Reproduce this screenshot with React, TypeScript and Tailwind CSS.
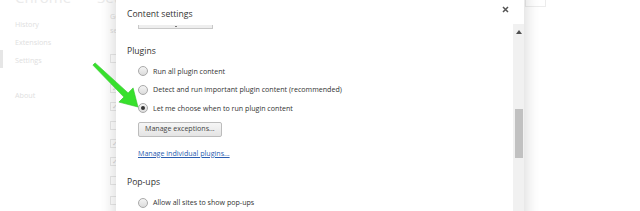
import React from 'react';

const navItems = ['History', 'Extensions', 'Settings'];
const checks = [
  { top: 'mt-[19px]', on: false },
  { top: 'mt-[21px]', on: true },
  { top: 'mt-[9px]', on: true },
  { top: 'mt-[10px]', on: false },
  { top: 'mt-[9px]', on: true },
  { top: 'mt-[9px]', on: true },
  { top: 'mt-[10px]', on: false },
  { top: 'mt-[11px]', on: false },
];

const Radio: React.FC<{ checked?: boolean; label: string }> = ({ checked, label }) => (
  <div className="flex items-center gap-[5px] h-[18.5px] pl-[22px]">
    <span className="w-[10px] h-[10px] rounded-full border border-[#a9a9a9] bg-gradient-to-b from-[#f4f4f4] to-[#dcdcdc] flex items-center justify-center shrink-0">
      {checked && <span className="w-[4px] h-[4px] rounded-full bg-[#333]" />}
    </span>
    <span className="text-[7.1px] text-[#333]">{label}</span>
  </div>
);

export default function App() {
  return (
    <div className="relative w-[640px] h-[211px] overflow-hidden bg-white font-['Open_Sans',_'Noto_Sans',_sans-serif]">
      {/* faded settings page underneath */}
      <div className="flex h-full">
        <div className="relative w-[97px] shrink-0">
          <div className="absolute left-0 top-[50px] w-[3px] h-[18px] bg-[#e6e6e6]" />
          <div className="pl-[15px] -mt-[13px] text-[15px] text-[#ebebeb] leading-[20px]">Chrome</div>
          <div className="pl-[15px] mt-[8px] flex flex-col text-[7.2px] text-[#e0e0e0] leading-[18px]">
            {navItems.map((n) => (
              <span key={n}>{n}</span>
            ))}
            <span className="mt-[17px]">About</span>
          </div>
        </div>
        <div className="flex-1 pl-[13px]">
          <div className="-ml-[13px] -mt-[13px] text-[15px] text-[#ebebeb] leading-[20px]">Settings</div>
          <div className="text-[7.2px] text-[#dedede] leading-[14px] mt-[2px]">Go<br />se</div>
          <div className="flex flex-col -mt-[2px]">
            {checks.map((c, i) => (
              <span key={i} className={`${c.top} w-[9px] h-[9px] border border-[#e8e8e8] flex items-center justify-center text-[7px] leading-none text-[#d6d6d6]`}>
                {c.on ? '✓' : ''}
              </span>
            ))}
          </div>
        </div>
      </div>
      <div className="absolute left-[525px] top-[-4px] w-[21px] h-[11px] border border-[#ececec] bg-white" />

      {/* dialog */}
      <div className="absolute left-[116px] top-[-6px] w-[408px] h-[230px] bg-white shadow-[0_0_12px_4px_rgba(0,0,0,0.12)] flex flex-col">
        <div className="h-[30px] shrink-0 flex items-end justify-between pl-[11px] pr-[15px] pb-[5px]">
          <span className="text-[8.6px] text-[#333] leading-none">Content settings</span>
          <svg width="7" height="7" viewBox="0 0 7 7" className="mb-[6px]">
            <path d="M1 1 L6 6 M6 1 L1 6" stroke="#555" strokeWidth="1.5" />
          </svg>
        </div>
        <div className="flex flex-1 min-h-0">
          <div className="flex-1 relative">
            <div className="ml-[22px] w-[75px] h-[4px] mt-[1px] border border-t-0 border-[#c8c8c8] bg-[#eee] relative">
              <span className="absolute left-[36px] top-[1px] w-[2px] h-[1px] bg-[#777]" />
            </div>
            <div className="pl-[11px] mt-[16px] text-[8.6px] text-[#333] leading-[12px]">Plugins</div>
            <div className="mt-[5px] flex flex-col">
              <Radio label="Run all plugin content" />
              <Radio label="Detect and run important plugin content (recommended)" />
              <Radio checked label="Let me choose when to run plugin content" />
            </div>
            <div className="pl-[22px] mt-[4px] flex">
              <button className="h-[15px] px-[6px] border border-[#bcbcbc] rounded-[2px] bg-gradient-to-b from-[#f6f6f6] to-[#e4e4e4] text-[7.1px] text-[#444] leading-none">
                Manage exceptions...
              </button>
            </div>
            <div className="pl-[22px] mt-[10px] text-[7.1px] text-[#2a5db0] underline leading-[12px]">
              Manage individual plugins...
            </div>
            <div className="pl-[11px] mt-[17px] text-[8.6px] text-[#333] leading-[12px]">Pop-ups</div>
            <div className="mt-[6px]">
              <Radio label="Allow all sites to show pop-ups" />
            </div>
          </div>
          <div className="w-[11px] shrink-0 bg-[#f1f1f1] flex flex-col items-center">
            <svg width="6" height="4" viewBox="0 0 6 4" className="mt-[6px]">
              <path d="M0 4 L3 0 L6 4 Z" fill="#505050" />
            </svg>
            <div className="mt-[75px] w-[8px] h-[49px] bg-[#c1c1c1]" />
          </div>
        </div>
      </div>

      {/* green pointer */}
      <svg className="absolute left-0 top-0" width="640" height="211" viewBox="0 0 640 211">
        <polygon
          points="92.9,65.1 95.1,62.9 128.1,92.9 133.1,87.9 138,107 118.9,102.1 123.9,97.1"
          fill="#37e02c"
          stroke="#2cc424"
          strokeWidth="0.6"
          strokeLinejoin="round"
        />
      </svg>
    </div>
  );
}
